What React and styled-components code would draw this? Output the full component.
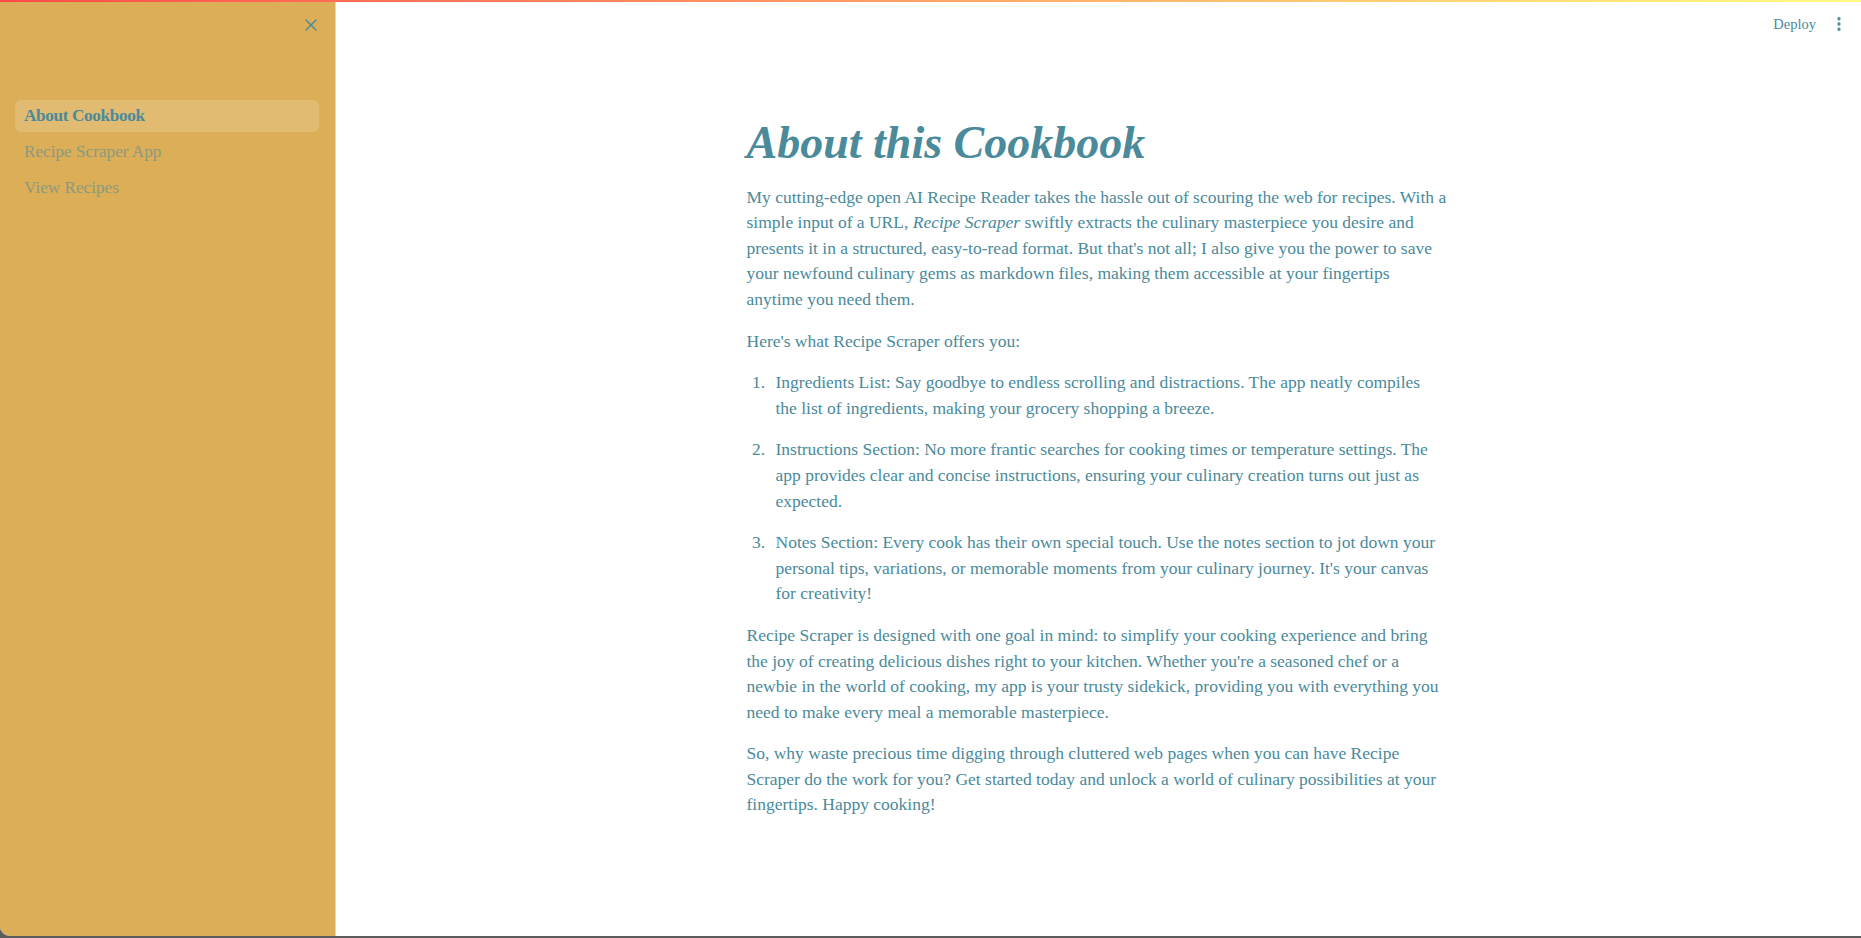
import React from "react";
import styled, { createGlobalStyle } from "styled-components";
import { X, EllipsisVertical } from "lucide-react";

const TEAL = "#4a8a9b";
const GOLD = "#dcae58";

const GlobalStyle = createGlobalStyle`
  html, body {
    margin: 0;
    padding: 0;
    height: 100%;
    background: #5c5c5c;
  }
  body {
    font-family: "Liberation Serif", "Times New Roman", serif;
    color: ${TEAL};
    overflow: hidden;
  }
  #root { height: 100%; }
  * { box-sizing: border-box; }
`;

const Frame = styled.div`
  position: relative;
  height: calc(100vh - 2px);
  display: flex;
  background: #ffffff;
  border-bottom-left-radius: 10px;
  overflow: hidden;
`;

const Decoration = styled.div`
  position: absolute;
  top: 0;
  left: 0;
  right: 0;
  height: 2px;
  background: linear-gradient(90deg, rgb(255, 75, 75), rgb(255, 253, 128));
  z-index: 5;
`;

const Sidebar = styled.aside`
  width: 336px;
  flex: 0 0 336px;
  background: ${GOLD};
  border-right: 1px solid #f0d59c;
  padding: 0 16px 0 15px;
  display: flex;
  flex-direction: column;
`;

const SidebarHeader = styled.div`
  height: 50px;
  display: flex;
  align-items: center;
  justify-content: flex-end;
`;

const CloseButton = styled.button`
  border: none;
  background: transparent;
  padding: 0;
  width: 20px;
  height: 20px;
  margin-right: -2px;
  display: flex;
  align-items: center;
  justify-content: center;
  color: ${TEAL};
  cursor: pointer;
`;

const Nav = styled.nav`
  margin-top: 50px;
  display: flex;
  flex-direction: column;
  gap: 4px;
`;

const NavItem = styled.a`
  height: 32px;
  display: flex;
  align-items: center;
  padding-left: 9px;
  border-radius: 6px;
  font-size: 17.2px;
  text-decoration: none;
  color: ${TEAL};
  font-weight: ${(p) => (p.$active ? 700 : 400)};
  letter-spacing: ${(p) => (p.$active ? "-0.35px" : "0")};
  background: ${(p) => (p.$active ? "rgba(255, 255, 255, 0.16)" : "transparent")};
  opacity: ${(p) => (p.$active ? 1 : 0.55)};
  cursor: pointer;
`;

const Main = styled.main`
  flex: 1;
  display: flex;
  flex-direction: column;
  min-width: 0;
`;

const Header = styled.header`
  height: 48px;
  display: flex;
  align-items: center;
  justify-content: flex-end;
  gap: 14px;
  padding-right: 13px;
`;

const DeployButton = styled.button`
  border: none;
  background: transparent;
  padding: 0;
  font-family: "Liberation Serif", serif;
  font-size: 14.5px;
  color: ${TEAL};
  cursor: pointer;
`;

const MenuButton = styled.button`
  border: none;
  background: transparent;
  padding: 0;
  display: flex;
  color: ${TEAL};
  cursor: pointer;
`;

const Content = styled.div`
  width: 704px;
  margin: 0 auto;
  padding-top: 66px;
  font-size: 17.5px;
  line-height: 25.6px;
`;

const Title = styled.h1`
  margin: 0 0 13px 0;
  font-size: 46px;
  line-height: 57.6px;
  font-weight: 700;
  font-style: italic;
  color: ${TEAL};
`;

const Para = styled.p`
  margin: 0 0 16px 0;
`;

const List = styled.ol`
  margin: 0 0 16px 0;
  padding-left: 23px;
`;

const ListItem = styled.li`
  padding-left: 6px;
  margin-bottom: 16px;
  &:last-child { margin-bottom: 0; }
`;

export default function App() {
  return (
    <>
      <GlobalStyle />
      <Frame>
        <Decoration />
        <Sidebar>
          <SidebarHeader>
            <CloseButton aria-label="Close sidebar">
              <X size={20} strokeWidth={1.6} />
            </CloseButton>
          </SidebarHeader>
          <Nav>
            <NavItem $active>About Cookbook</NavItem>
            <NavItem>Recipe Scraper App</NavItem>
            <NavItem>View Recipes</NavItem>
          </Nav>
        </Sidebar>
        <Main>
          <Header>
            <DeployButton>Deploy</DeployButton>
            <MenuButton aria-label="Main menu">
              <EllipsisVertical size={18} strokeWidth={2.4} />
            </MenuButton>
          </Header>
          <Content>
            <Title>About this Cookbook</Title>
            <Para>
              My cutting-edge open AI Recipe Reader takes the hassle out of scouring the web for recipes. With a
              simple input of a URL, <em>Recipe Scraper</em> swiftly extracts the culinary masterpiece you desire and
              presents it in a structured, easy-to-read format. But that's not all; I also give you the power to save
              your newfound culinary gems as markdown files, making them accessible at your fingertips
              <br />
              anytime you need them.
            </Para>
            <Para>Here's what Recipe Scraper offers you:</Para>
            <List>
              <ListItem>
                Ingredients List: Say goodbye to endless scrolling and distractions. The app neatly compiles
                <br />
                the list of ingredients, making your grocery shopping a breeze.
              </ListItem>
              <ListItem>
                Instructions Section: No more frantic searches for cooking times or temperature settings. The app
                provides clear and concise instructions, ensuring your culinary creation turns out just as expected.
              </ListItem>
              <ListItem>
                Notes Section: Every cook has their own special touch. Use the notes section to jot down your personal
                tips, variations, or memorable moments from your culinary journey. It's your canvas for creativity!
              </ListItem>
            </List>
            <Para>
              Recipe Scraper is designed with one goal in mind: to simplify your cooking experience and bring the joy
              of creating delicious dishes right to your kitchen. Whether you're a seasoned chef or a newbie in the
              world of cooking, my app is your trusty sidekick, providing you with everything you need to make every
              meal a memorable masterpiece.
            </Para>
            <Para>
              So, why waste precious time digging through cluttered web pages when you can have Recipe Scraper do the
              work for you? Get started today and unlock a world of culinary possibilities at your fingertips. Happy
              cooking!
            </Para>
          </Content>
        </Main>
      </Frame>
    </>
  );
}
